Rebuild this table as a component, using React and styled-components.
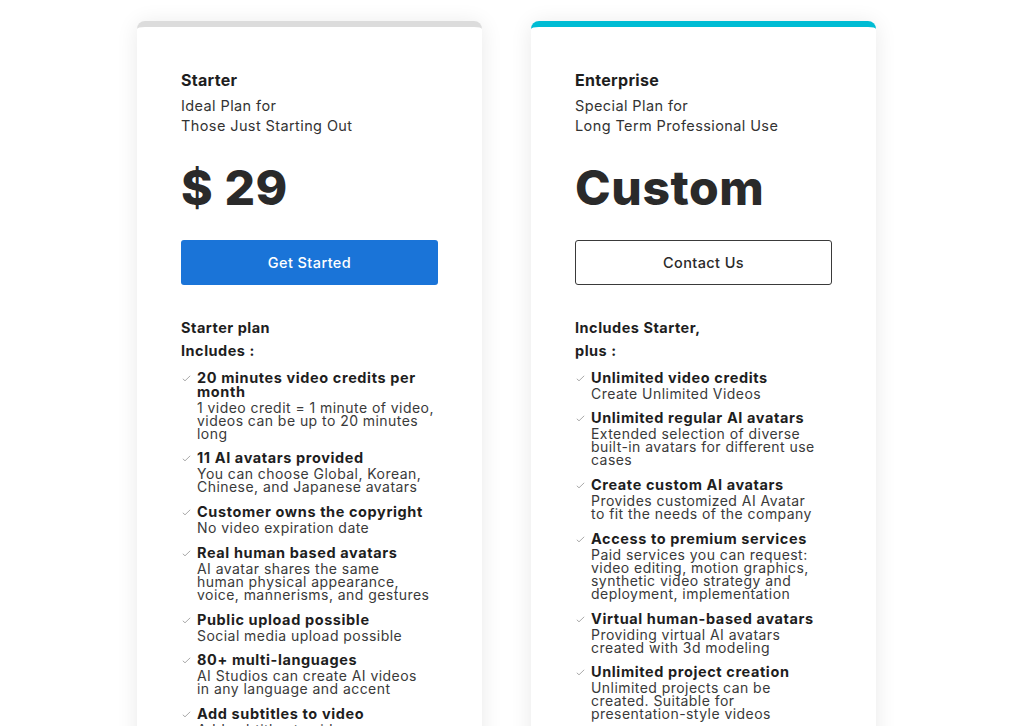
import React from 'react'
import styled, { createGlobalStyle } from 'styled-components'

const GlobalStyle = createGlobalStyle`
  body {
    margin: 0;
    background: #ffffff;
    font-family: Inter, "Open Sans", sans-serif;
    color: #222;
  }
`

// descriptions keep the line breaks from the design copy
const plans = [
  {
    name: 'Starter',
    sub: ['Ideal Plan for', 'Those Just Starting Out'],
    price: '$ 29',
    accent: '#dcdcdc',
    cta: 'Get Started',
    primary: true,
    heading: ['Starter plan', 'Includes :'],
    features: [
      ['20 minutes video credits per month', '1 video credit = 1 minute of video,\nvideos can be up to 20 minutes\nlong'],
      ['11 AI avatars provided', 'You can choose Global, Korean,\nChinese, and Japanese avatars'],
      ['Customer owns the copyright', 'No video expiration date'],
      ['Real human based avatars', 'AI avatar shares the same\nhuman physical appearance,\nvoice, mannerisms, and gestures'],
      ['Public upload possible', 'Social media upload possible'],
      ['80+ multi-languages', 'AI Studios can create AI videos\nin any language and accent'],
      ['Add subtitles to video', 'Add subtitles to videos'],
    ],
  },
  {
    name: 'Enterprise',
    sub: ['Special Plan for', 'Long Term Professional Use'],
    price: 'Custom',
    accent: '#00bcd4',
    cta: 'Contact Us',
    primary: false,
    heading: ['Includes Starter,', 'plus :'],
    features: [
      ['Unlimited video credits', 'Create Unlimited Videos'],
      ['Unlimited regular AI avatars', 'Extended selection of diverse\nbuilt-in avatars for different use\ncases'],
      ['Create custom AI avatars', 'Provides customized AI Avatar\nto fit the needs of the company'],
      ['Access to premium services', 'Paid services you can request:\nvideo editing, motion graphics,\nsynthetic video strategy and\ndeployment, implementation'],
      ['Virtual human-based avatars', 'Providing virtual AI avatars\ncreated with 3d modeling'],
      ['Unlimited project creation', 'Unlimited projects can be\ncreated. Suitable for\npresentation-style videos'],
    ],
  },
]

const Page = styled.div`
  display: flex;
  align-items: flex-start;
  gap: 49px;
  padding: 21px 0 0 137px;
  height: 726px;
  box-sizing: border-box;
  overflow: hidden;
`

const Card = styled.div`
  width: 345px;
  flex: none;
  box-sizing: border-box;
  background: #fff;
  border-radius: 8px;
  border-top: 6px solid ${p => p.accent};
  box-shadow: 0 2px 22px rgba(0, 0, 0, 0.09);
  padding: 43px 44px 40px;
`

const Title = styled.div`
  font-size: 16px;
  font-weight: 700;
  line-height: 20px;
  letter-spacing: 0.3px;
  color: #1e1e1e;
`

const Sub = styled.div`
  margin-top: 6px;
  font-size: 14.5px;
  line-height: 20px;
  letter-spacing: 0.4px;
  color: #333;
`

const Price = styled.div`
  margin-top: 22px;
  font-size: 48px;
  font-weight: 800;
  line-height: 60px;
  color: #2a2a2a;
  letter-spacing: 0.6px;
`

const Button = styled.button`
  display: block;
  width: 100%;
  height: 45px;
  margin-top: 22px;
  border-radius: 3px;
  font-family: inherit;
  font-size: 14.5px;
  letter-spacing: 0.4px;
  font-weight: 500;
  cursor: pointer;
  background: ${p => (p.primary ? '#1a74d8' : '#fff')};
  color: ${p => (p.primary ? '#fff' : '#2a2a2a')};
  border: ${p => (p.primary ? 'none' : '1.5px solid #3a3a3a')};
`

const Heading = styled.div`
  margin-top: 31px;
  font-size: 14.5px;
  font-weight: 700;
  line-height: 23px;
  letter-spacing: 0.5px;
  color: #1e1e1e;
`

const List = styled.ul`
  list-style: none;
  margin: 8.5px 0 0;
  padding: 0;
  display: flex;
  flex-direction: column;
  gap: 11.8px;
`

const Item = styled.li`
  display: grid;
  grid-template-columns: 16px 1fr;
`

const Check = styled.svg`
  margin-top: 4px;
  margin-left: 1px;
`

const ItemTitle = styled.div`
  font-size: 14.5px;
  font-weight: 700;
  line-height: 14px;
  letter-spacing: 0.6px;
  color: #1e1e1e;
`

const ItemDesc = styled.div`
  font-size: 14px;
  line-height: 13px;
  letter-spacing: 0.45px;
  color: #3a3a3a;
  margin-top: 2px;
  white-space: pre-line;
`

const CheckIcon = () => (
  <Check width="9" height="7" viewBox="0 0 9 7">
    <path d="M0.8 3.8 L3 5.8 L8.2 0.8" fill="none" stroke="#aaa" strokeWidth="1" />
  </Check>
)

export default function App() {
  return (
    <>
      <GlobalStyle />
      <Page>
        {plans.map(plan => (
          <Card key={plan.name} accent={plan.accent}>
            <Title>{plan.name}</Title>
            <Sub>
              {plan.sub[0]}
              <br />
              {plan.sub[1]}
            </Sub>
            <Price>{plan.price}</Price>
            <Button primary={plan.primary}>{plan.cta}</Button>
            <Heading>
              {plan.heading[0]}
              <br />
              {plan.heading[1]}
            </Heading>
            <List>
              {plan.features.map(([t, d]) => (
                <Item key={t}>
                  <CheckIcon />
                  <div>
                    <ItemTitle>{t}</ItemTitle>
                    <ItemDesc>{d}</ItemDesc>
                  </div>
                </Item>
              ))}
            </List>
          </Card>
        ))}
      </Page>
    </>
  )
}
